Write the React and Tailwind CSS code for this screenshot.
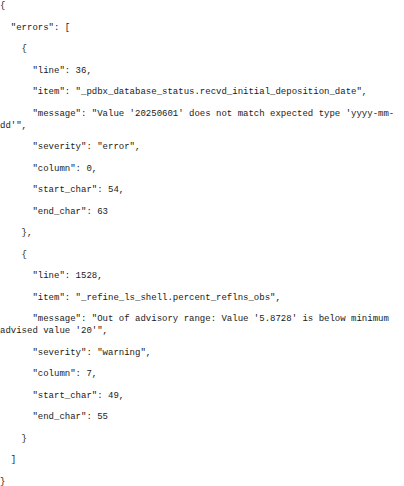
const lines = [
  "{",
  '  "errors": [',
  "    {",
  '      "line": 36,',
  '      "item": "_pdbx_database_status.recvd_initial_deposition_date",',
  '      "message": "Value \'20250601\' does not match expected type \'yyyy-mm-dd\'",',
  '      "severity": "error",',
  '      "column": 0,',
  '      "start_char": 54,',
  '      "end_char": 63',
  "    },",
  "    {",
  '      "line": 1528,',
  '      "item": "_refine_ls_shell.percent_reflns_obs",',
  '      "message": "Out of advisory range: Value \'5.8728\' is below minimum advised value \'20\'",',
  '      "severity": "warning",',
  '      "column": 7,',
  '      "start_char": 49,',
  '      "end_char": 55',
  "    }",
  "  ]",
  "}",
];

export default function App() {
  return (
    <div className="w-[404px] h-[486px] overflow-hidden bg-white text-[#1a1a1a] font-['Liberation_Mono',monospace] text-[9px] leading-[12px]">
      {lines.map((l, i) => (
        <div key={i} className="whitespace-pre-wrap mb-[9.5px]">
          {l}
        </div>
      ))}
    </div>
  );
}
